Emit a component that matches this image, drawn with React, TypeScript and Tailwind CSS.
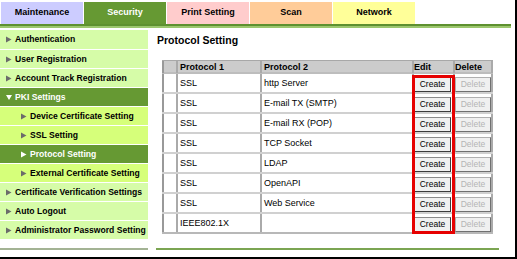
import React from 'react';

const tabs = [
  { label: 'Maintenance', cls: 'bg-[#ccccff] text-black' },
  { label: 'Security', cls: 'bg-[#669933] text-white' },
  { label: 'Print Setting', cls: 'bg-[#ffcccc] text-black' },
  { label: 'Scan', cls: 'bg-[#ffcc99] text-black' },
  { label: 'Network', cls: 'bg-[#ffff99] text-black' },
];

type NavItem = { label: string; level: 0 | 1; active?: boolean; open?: boolean };

const nav: NavItem[] = [
  { label: 'Authentication', level: 0 },
  { label: 'User Registration', level: 0 },
  { label: 'Account Track Registration', level: 0 },
  { label: 'PKI Settings', level: 0, active: true, open: true },
  { label: 'Device Certificate Setting', level: 1 },
  { label: 'SSL Setting', level: 1 },
  { label: 'Protocol Setting', level: 1, active: true },
  { label: 'External Certificate Setting', level: 1 },
  { label: 'Certificate Verification Settings', level: 0 },
  { label: 'Auto Logout', level: 0 },
  { label: 'Administrator Password Setting', level: 0 },
];

const rows = [
  ['SSL', 'http Server'],
  ['SSL', 'E-mail TX (SMTP)'],
  ['SSL', 'E-mail RX (POP)'],
  ['SSL', 'TCP Socket'],
  ['SSL', 'LDAP'],
  ['SSL', 'OpenAPI'],
  ['SSL', 'Web Service'],
  ['IEEE802.1X', ''],
];

const cols = 'grid grid-cols-[14px_84px_152px_41px_40px]';

const Arrow = ({ down, light }: { down?: boolean; light?: boolean }) => (
  <svg width="6" height="7" viewBox="0 0 6 7" className="shrink-0">
    {down ? (
      <polygon points="0,1 6,1 3,6" fill={light ? '#ffffff' : '#6b6b6b'} />
    ) : (
      <polygon points="0,0.5 5.5,3.5 0,6.5" fill={light ? '#ffffff' : '#6b6b6b'} />
    )}
  </svg>
);

export default function App() {
  return (
    <div className="w-[517px] h-[259px] bg-white border-r-2 border-b-2 border-black overflow-hidden font-['Liberation_Sans',Arial,sans-serif]">
      {/* tabs */}
      <div className="flex gap-[1px] pl-[1px] pt-[2px] h-[24px]">
        {tabs.map((t) => (
          <div
            key={t.label}
            className={`w-[82px] h-[22px] flex items-center justify-center text-[9px] font-bold ${t.cls}`}
          >
            {t.label}
          </div>
        ))}
      </div>
      <div className="w-[511px]">
        <div className="h-[2px] bg-[#5e9130]" />
        <div className="h-[2px] bg-[#9cc76e]" />
      </div>

      <div className="flex pt-[2px]">
        {/* sidebar */}
        <div className="w-[148px] flex flex-col">
          {nav.map((n, i) => (
            <div
              key={n.label}
              className={`flex items-center gap-[3px] text-[8.6px] font-bold whitespace-nowrap ${
                i === 0 ? 'h-[19px]' : 'h-[18px] mt-[1px]'
              } ${n.level === 1 ? 'pl-[21px]' : 'pl-[6px]'} ${
                n.active
                  ? 'bg-[#669933] text-white'
                  : n.level === 1
                  ? 'bg-[#d6ff7a] text-black'
                  : 'bg-[#d6fca8] text-black'
              }`}
            >
              <Arrow down={n.open} light={n.active} />
              <span>{n.label}</span>
            </div>
          ))}
          <div className="h-[2px] mt-[9px] bg-[#a3b394]" />
        </div>

        {/* content */}
        <div className="ml-[6px] w-[345px] flex flex-col">
          <h1 className="pl-[3px] pt-[4px] text-[10.5px] leading-[13px] font-bold text-black">
            Protocol Setting
          </h1>

          <div className="relative ml-[8px] mt-[13px] w-[331px] text-[9px] text-black">
            <div className={`${cols} h-[14px] bg-[#cccccc] border-t border-b-2 border-t-[#a8a8a8] border-b-[#bdbdbd] font-bold`}>
              <div className="border-l-2 border-[#999]" />
              <div className="border-l-2 border-[#aaa] pl-[2px] leading-[12px]">Protocol 1</div>
              <div className="border-l-2 border-[#aaa] pl-[2px] leading-[12px]">Protocol 2</div>
              <div className="border-l-2 border-[#aaa] leading-[12px]">Edit</div>
              <div className="border-l-2 border-r-2 border-[#aaa] leading-[12px]">Delete</div>
            </div>
            {rows.map(([p1, p2], i) => (
              <div
                key={i}
                className={`${cols} h-[20px] border-b-2 ${i === rows.length - 1 ? 'border-[#b8b8b8]' : 'border-[#d0d0d0]'}`}
              >
                <div className="border-l-2 border-[#999]" />
                <div className="border-l-2 border-[#aaa] pl-[2px] leading-[18px]">{p1}</div>
                <div className="border-l-2 border-[#aaa] pl-[2px] leading-[18px]">{p2}</div>
                <div className="border-l-2 border-[#aaa] pt-[3px]">
                  <button className="w-[37px] h-[15px] flex items-center justify-center bg-[#f0f0f0] border border-[#8a8a8a] border-r-[#3c3c3c] border-b-[#3c3c3c] text-[8.5px] text-black">
                    Create
                  </button>
                </div>
                <div className="border-l-2 border-r-2 border-[#aaa] pt-[3px]">
                  <button
                    disabled
                    className="w-[36px] h-[15px] flex items-center justify-center bg-[#f0f0f0] border border-[#b0b0b0] border-r-[#707070] border-b-[#707070] text-[8.5px] text-[#b4b4b4]"
                  >
                    Delete
                  </button>
                </div>
              </div>
            ))}

            {/* highlight around the Edit column */}
            <div className="absolute left-[250px] top-[15px] w-[43px] h-[159px] border-[3px] border-[#e60000] pointer-events-none" />
          </div>

          <div className="ml-[2px] mt-[14px] w-[343px] h-[2px] bg-[#7ba552]" />
        </div>
      </div>
    </div>
  );
}
